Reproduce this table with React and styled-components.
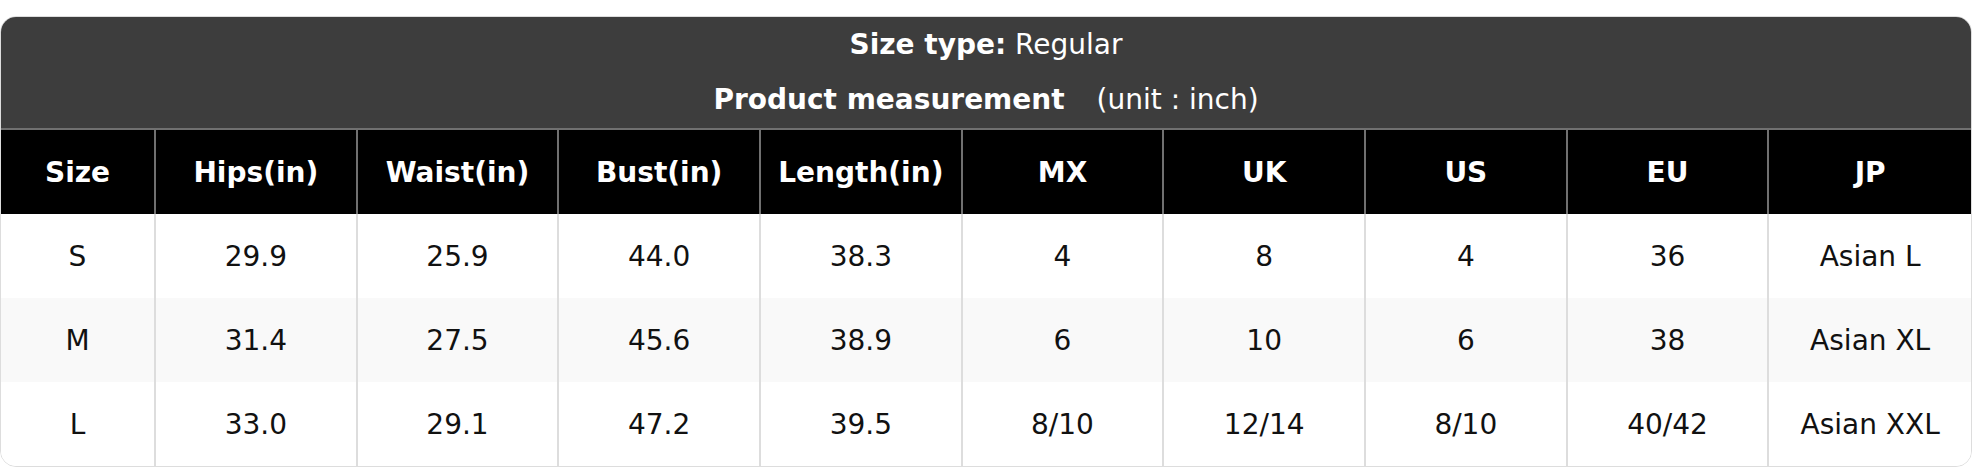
import React from "react";
import styled, { createGlobalStyle } from "styled-components";

const columns = ["Size", "Hips(in)", "Waist(in)", "Bust(in)", "Length(in)", "MX", "UK", "US", "EU", "JP"];

const rows = [
  ["S", "29.9", "25.9", "44.0", "38.3", "4", "8", "4", "36", "Asian L"],
  ["M", "31.4", "27.5", "45.6", "38.9", "6", "10", "6", "38", "Asian XL"],
  ["L", "33.0", "29.1", "47.2", "39.5", "8/10", "12/14", "8/10", "40/42", "Asian XXL"],
];

const GlobalStyle = createGlobalStyle`
  * {
    box-sizing: border-box;
  }
  body {
    margin: 0;
    padding-top: 16px;
    background: #ffffff;
    font-family: "DejaVu Sans", Verdana, sans-serif;
  }
`;

const App = () => {
  return (
    <>
      <GlobalStyle />
      <Card>
        <TitleBar>
          <TitleLine h={54}>
            <strong>Size type:</strong> Regular
          </TitleLine>
          <TitleLine h={56}>
            <strong>Product measurement</strong>
            <Unit>(unit : inch)</Unit>
          </TitleLine>
        </TitleBar>
        <Grid>
          {columns.map((col, i) => (
            <HeadCell key={col} last={i === columns.length - 1}>
              {col}
            </HeadCell>
          ))}
          {rows.map((row, r) =>
            row.map((val, i) => (
              <Cell key={r + "-" + i} striped={r % 2 === 1} last={i === row.length - 1}>
                {val}
              </Cell>
            ))
          )}
        </Grid>
      </Card>
    </>
  );
};

export default App;

const Card = styled.div`
  width: 1972px;
  border: 1px solid #dddddd;
  border-radius: 16px;
  overflow: hidden;
  background: #ffffff;
`;

const TitleBar = styled.div`
  background: #3d3d3d;
  color: #ffffff;
  display: flex;
  flex-direction: column;
  align-items: center;
  padding-bottom: 1px;
  border-bottom: 2px solid #707070;
`;

const TitleLine = styled.div`
  height: ${({ h }) => h}px;
  display: flex;
  align-items: center;
  font-size: 28px;
  white-space: pre;
  strong {
    font-weight: 700;
  }
`;

const Unit = styled.span`
  margin-left: 32px;
`;

const Grid = styled.div`
  display: grid;
  grid-template-columns: 155px repeat(9, 1fr);
  grid-auto-rows: 84px;
`;

const HeadCell = styled.div`
  background: #000000;
  color: #ffffff;
  font-size: 28px;
  font-weight: 700;
  display: flex;
  align-items: center;
  justify-content: center;
  border-right: ${({ last }) => (last ? "none" : "2px solid #707070")};
`;

const Cell = styled.div`
  background: ${({ striped }) => (striped ? "#f9f9f9" : "#ffffff")};
  color: #111111;
  font-size: 28px;
  display: flex;
  align-items: center;
  justify-content: center;
  border-right: ${({ last }) => (last ? "none" : "2px solid #dddddd")};
`;
